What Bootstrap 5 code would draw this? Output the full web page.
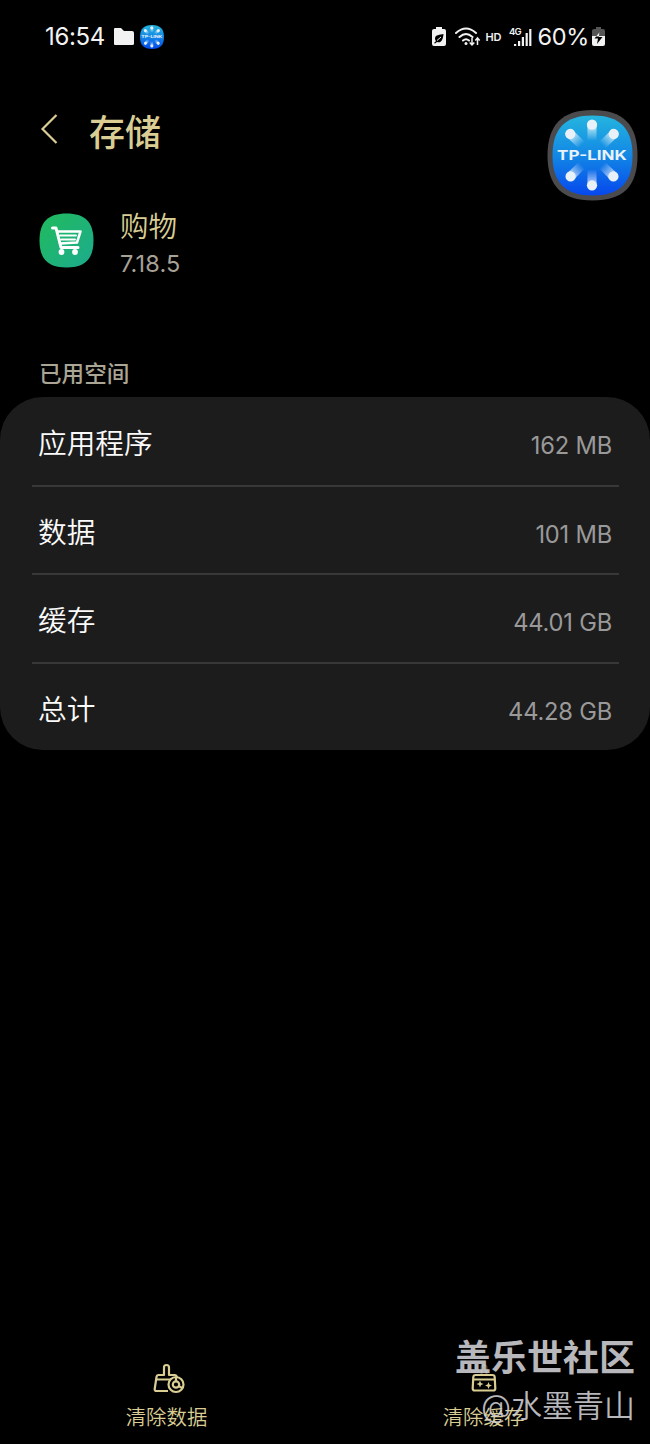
<!DOCTYPE html>
<html lang="zh-CN">
<head>
<meta charset="utf-8">
<meta name="viewport" content="width=device-width, initial-scale=1">
<title>存储</title>
<link href="https://cdn.jsdelivr.net/npm/bootstrap@5.3.0/dist/css/bootstrap.min.css" rel="stylesheet">
<style>
  body { background: #000; color: #fafafa; font-family: Inter, "Noto Sans CJK SC", sans-serif; line-height: 1; }
  svg { display: block; flex: none; }
  .screen { width: 650px; height: 1444px; overflow: hidden; }
  .status { height: 74px; padding: 0 45px; color: #f2f2f2; }
  .clock { font-size: 24px; letter-spacing: -.35px; }
  .percent { font-size: 23.5px; letter-spacing: -.35px; }
  .hd { font-size: 11px; font-weight: 600; }
  .gold { color: #d9cd94; }
  .top-bar { height: 120px; padding: 0 40px; }
  .page-title { font-size: 36px; font-weight: 500; margin-left: 30px; }
  .app-info { height: 92px; padding-left: 39px; gap: 26px; }
  .app-name { font-size: 28.5px; font-weight: 350; }
  .version { font-size: 23.5px; font-weight: 400; color: #a7a196; letter-spacing: .2px; }
  .section-label { height: 111px; padding: 0 39px 10px; font-size: 22.6px; font-weight: 500; color: #aaa594; }
  .panel { background: #1c1c1c; border-radius: 43px; height: 353px; padding: 1px 31.5px 0; }
  .entry { flex: 1 1 0; padding: 7px 6.5px 0; border-bottom: 2px solid #383838; }
  .entry:last-child { border-bottom: 0; }
  .entry-name { font-size: 28.7px; font-weight: 350; }
  .entry-size { font-size: 23.7px; font-weight: 400; color: #999; padding-top: 3px; letter-spacing: -.2px; }
  .actions { height: 94px; padding: 13px 8px 0; }
  .action { font-size: 20.4px; font-weight: 350; gap: 13px; }
  .floating { left: 547px; top: 109px; }
  .watermark { right: 15px; bottom: 23px; color: rgba(210,210,215,.88); }
  .wm-name { font-size: 36px; font-weight: 700; }
  .wm-user { font-size: 31px; font-weight: 350; }
</style>
</head>
<body>
<svg width="0" height="0" class="position-absolute" aria-hidden="true">
  <defs>
    <linearGradient id="blue" x1="0" y1="0" x2="0" y2="1"><stop offset="0" stop-color="#25b5df"/><stop offset=".5" stop-color="#1287e5"/><stop offset="1" stop-color="#0647ed"/></linearGradient>
    <linearGradient id="ray" x1="0" y1="0" x2="0" y2="1"><stop offset="0" stop-color="#fff" stop-opacity=".7"/><stop offset="1" stop-color="#fff" stop-opacity="0"/></linearGradient>
    <g id="petal"><path d="M-4.500-28h9L4.300-14h-8.600z" fill="url(#ray)"/><circle cy="-29.500" r="5" fill="#e9f1f8"/></g>
    <g id="tplink">
      <path d="M39 0C65.500 0 78 12.500 78 39S65.500 78 39 78 0 65.500 0 39 12.500 0 39 0z" fill="url(#blue)"/>
      <g transform="translate(38.500 38.500)">
        <use href="#petal"/><use href="#petal" transform="rotate(180)"/>
        <use href="#petal" transform="rotate(46)"/><use href="#petal" transform="rotate(-46)"/>
        <use href="#petal" transform="rotate(135)"/><use href="#petal" transform="rotate(-135)"/>
      </g>
      <text x="4.500" y="43.200" font-family="Inter, sans-serif" font-size="12.800" font-weight="700" fill="#eaf2fa" textLength="68" lengthAdjust="spacingAndGlyphs">TP-LINK</text>
    </g>
  </defs>
</svg>
<main class="screen position-relative d-flex flex-column">
  <header class="status d-flex align-items-center justify-content-between">
    <div class="d-flex align-items-center">
      <span class="clock">16:54</span>
      <svg class="ms-2" width="22" height="20" viewBox="0 0 22 20"><path d="M2 1h6l3 3h8q2 0 2 2v11q0 1-2 1H2q-1 0-1-1V2q0-1 1-1z" fill="#f2f2f2"/></svg>
      <svg style="margin-left:5px" width="24" height="24" viewBox="0 0 78 78"><use href="#tplink"/></svg>
    </div>
    <div class="d-flex align-items-center">
      <svg width="14" height="20" viewBox="0 0 14 20"><path d="M4 0h6v2h2q2 0 2 2v13q0 2-2 2H2q-2 0-2-2V4q0-2 2-2h2z" fill="#f2f2f2"/><path d="M11.500 7C8 8 3 7.500 3 11.500q0 1.500 1 2.500l-2 2 1 .5 2-1.500c4 1.500 6-2 6.500-8z" fill="#000"/><path d="M5 13.500 9 10" stroke="#f2f2f2"/></svg>
      <svg style="margin-left:9px" width="26" height="20" viewBox="0 0 26 20" fill="none" stroke="#f2f2f2" stroke-width="2"><path d="M1 6Q11-3 21 6M4.500 10q6.500-6 13 0M8 13.500q3-2.500 6 0" stroke-linecap="round"/><circle cx="11" cy="16.500" r="1.500" fill="#f2f2f2" stroke="none"/><path d="M17 11v7m-2.300-2.500L17 18l2.300-2.500M22.500 18v-7M20.300 13.500l2.200-2.500 2.200 2.500" stroke-width="1.500"/></svg>
      <span class="hd" style="margin-left:4px">HD</span>
      <svg style="margin-left:7px" width="24" height="21" viewBox="0 0 24 21" fill="#f2f2f2"><text x="0" y="7.500" font-family="Inter, sans-serif" font-size="9.500" font-weight="600" textLength="12.500">4G</text><path d="M5 17h2.200v2H5zM9 14h2.200v5H9zM12.800 10H15v9h-2.200zM16.600 6h2.200v13h-2.200zM20.200 2h2.200v17h-2.200z"/></svg>
      <span class="percent" style="margin-left:5px">60%</span>
      <svg style="margin-left:3px" width="13" height="20" viewBox="0 0 13 20"><path d="M4 0h5v2h2q2 0 2 2v6H0V4q0-2 2-2h2z" fill="#555"/><path d="M0 9h13v8q0 2-2 2H2q-2 0-2-2z" fill="#f2f2f2"/><path d="M7.500 5 2.500 11.500h3.500L5 17l5.500-7H7z" fill="#000"/><path d="M7.500 5 4 9.500h3z" fill="#eee"/></svg>
    </div>
  </header>

  <nav class="top-bar gold d-flex align-items-center">
    <svg width="19" height="32" viewBox="0 0 19 32" style="margin-top:-10px"><path d="M16.500 2 2.500 16l14 14" fill="none" stroke="#d9cd94" stroke-width="2.200"/></svg>
    <h1 class="page-title mb-0">存储</h1>
  </nav>

  <section class="app-info d-flex align-items-center">
    <svg width="55" height="55" viewBox="0 0 55 55"><defs><linearGradient id="green" x1="0" y1="0" x2="1" y2="1"><stop offset="0" stop-color="#20bb5c"/><stop offset="1" stop-color="#1dab8e"/></linearGradient></defs>
      <path d="M27.500.500C46 .500 54.500 9 54.500 27.500S46 54.500 27.500 54.500.500 46 .500 27.500 9 .500 27.500.500z" fill="url(#green)"/>
      <g fill="none" stroke="#fff" stroke-linecap="round" stroke-linejoin="round"><path d="M13.500 15h3.500l5 19.500h17" stroke-width="3"/><path d="M18.500 18.500H41.500l-3.500 11-17 1" stroke-width="2.500"/><path d="M21 22.500h16M22 26.500h14" stroke-width="1.900"/></g>
      <circle cx="22.500" cy="39" r="2.900" fill="#fff"/><circle cx="36" cy="39" r="2.900" fill="#fff"/></svg>
    <div class="d-flex flex-column pt-2" style="gap:11px"><div class="app-name gold">购物</div><div class="version">7.18.5</div></div>
  </section>

  <h2 class="section-label d-flex align-items-end mb-0">已用空间</h2>
  <section class="panel d-flex flex-column">
    <div class="entry d-flex align-items-center justify-content-between"><span class="entry-name">应用程序</span><span class="entry-size">162 MB</span></div>
    <div class="entry d-flex align-items-center justify-content-between"><span class="entry-name">数据</span><span class="entry-size">101 MB</span></div>
    <div class="entry d-flex align-items-center justify-content-between"><span class="entry-name">缓存</span><span class="entry-size">44.01 GB</span></div>
    <div class="entry d-flex align-items-center justify-content-between"><span class="entry-name">总计</span><span class="entry-size">44.28 GB</span></div>
  </section>

  <footer class="actions gold row g-0 mt-auto">
    <div class="action col d-flex flex-column align-items-center">
      <svg style="margin-left:5px" width="32" height="32" viewBox="0 0 32 32" fill="none" stroke="#d9cd94" stroke-width="2.200" stroke-linejoin="round"><path d="M15 28H3.500Q1.500 28 1.700 26L3.500 14q.3-2 2-2H11V4.500Q11 2 13.500 2T16 4.500V12h6q1.500 0 2 2M3.500 16.500H18"/><circle cx="23" cy="21.500" r="7.500"/><circle cx="23" cy="21.500" r="3.200"/><path d="M23 14v4.300M25.500 23l3.800 2"/></svg>
      <span>清除数据</span>
    </div>
    <div class="action col d-flex flex-column align-items-center">
      <svg width="26" height="32" viewBox="0 0 26 32" fill="none" stroke="#d9cd94" stroke-width="2.200" stroke-linejoin="round"><path d="M10.500 12V4.500Q10.500 2 13 2t2.500 2.500V12" stroke-opacity=".3"/><path d="M4.500 12h17q2 0 2.200 2l.6 11.500q0 2-2 2H3.700q-2 0-2-2l.6-11.500q.2-2 2.200-2zM2.500 16.500h21"/><path d="m9 17.500 1 2.500 2.500 1-2.500 1-1 2.500L8 22l-2.500-1L8 20zM17.500 19l1 2.500 2.500 1-2.500 1-1 2.500-1-2.500-2.500-1 2.500-1z" fill="#d9cd94" stroke="none"/></svg>
      <span>清除缓存</span>
    </div>
  </footer>

  <svg class="floating position-absolute" width="91" height="92" viewBox="0 0 91 92"><path d="M45.500 1C76 1 90.500 15.500 90.500 46.500S76 91.500 45.500 91.500.500 77 .500 46.500 15 1 45.500 1z" fill="#4b4b4d"/><use href="#tplink" transform="translate(5.500 6.500) scale(1.026)"/></svg>
  <div class="watermark position-absolute d-flex flex-column align-items-end" style="gap:14px"><div class="wm-name">盖乐世社区</div><div class="wm-user">@水墨青山</div></div>
</main>
<script src="https://cdn.jsdelivr.net/npm/bootstrap@5.3.0/dist/js/bootstrap.bundle.min.js"></script>
</body>
</html>
